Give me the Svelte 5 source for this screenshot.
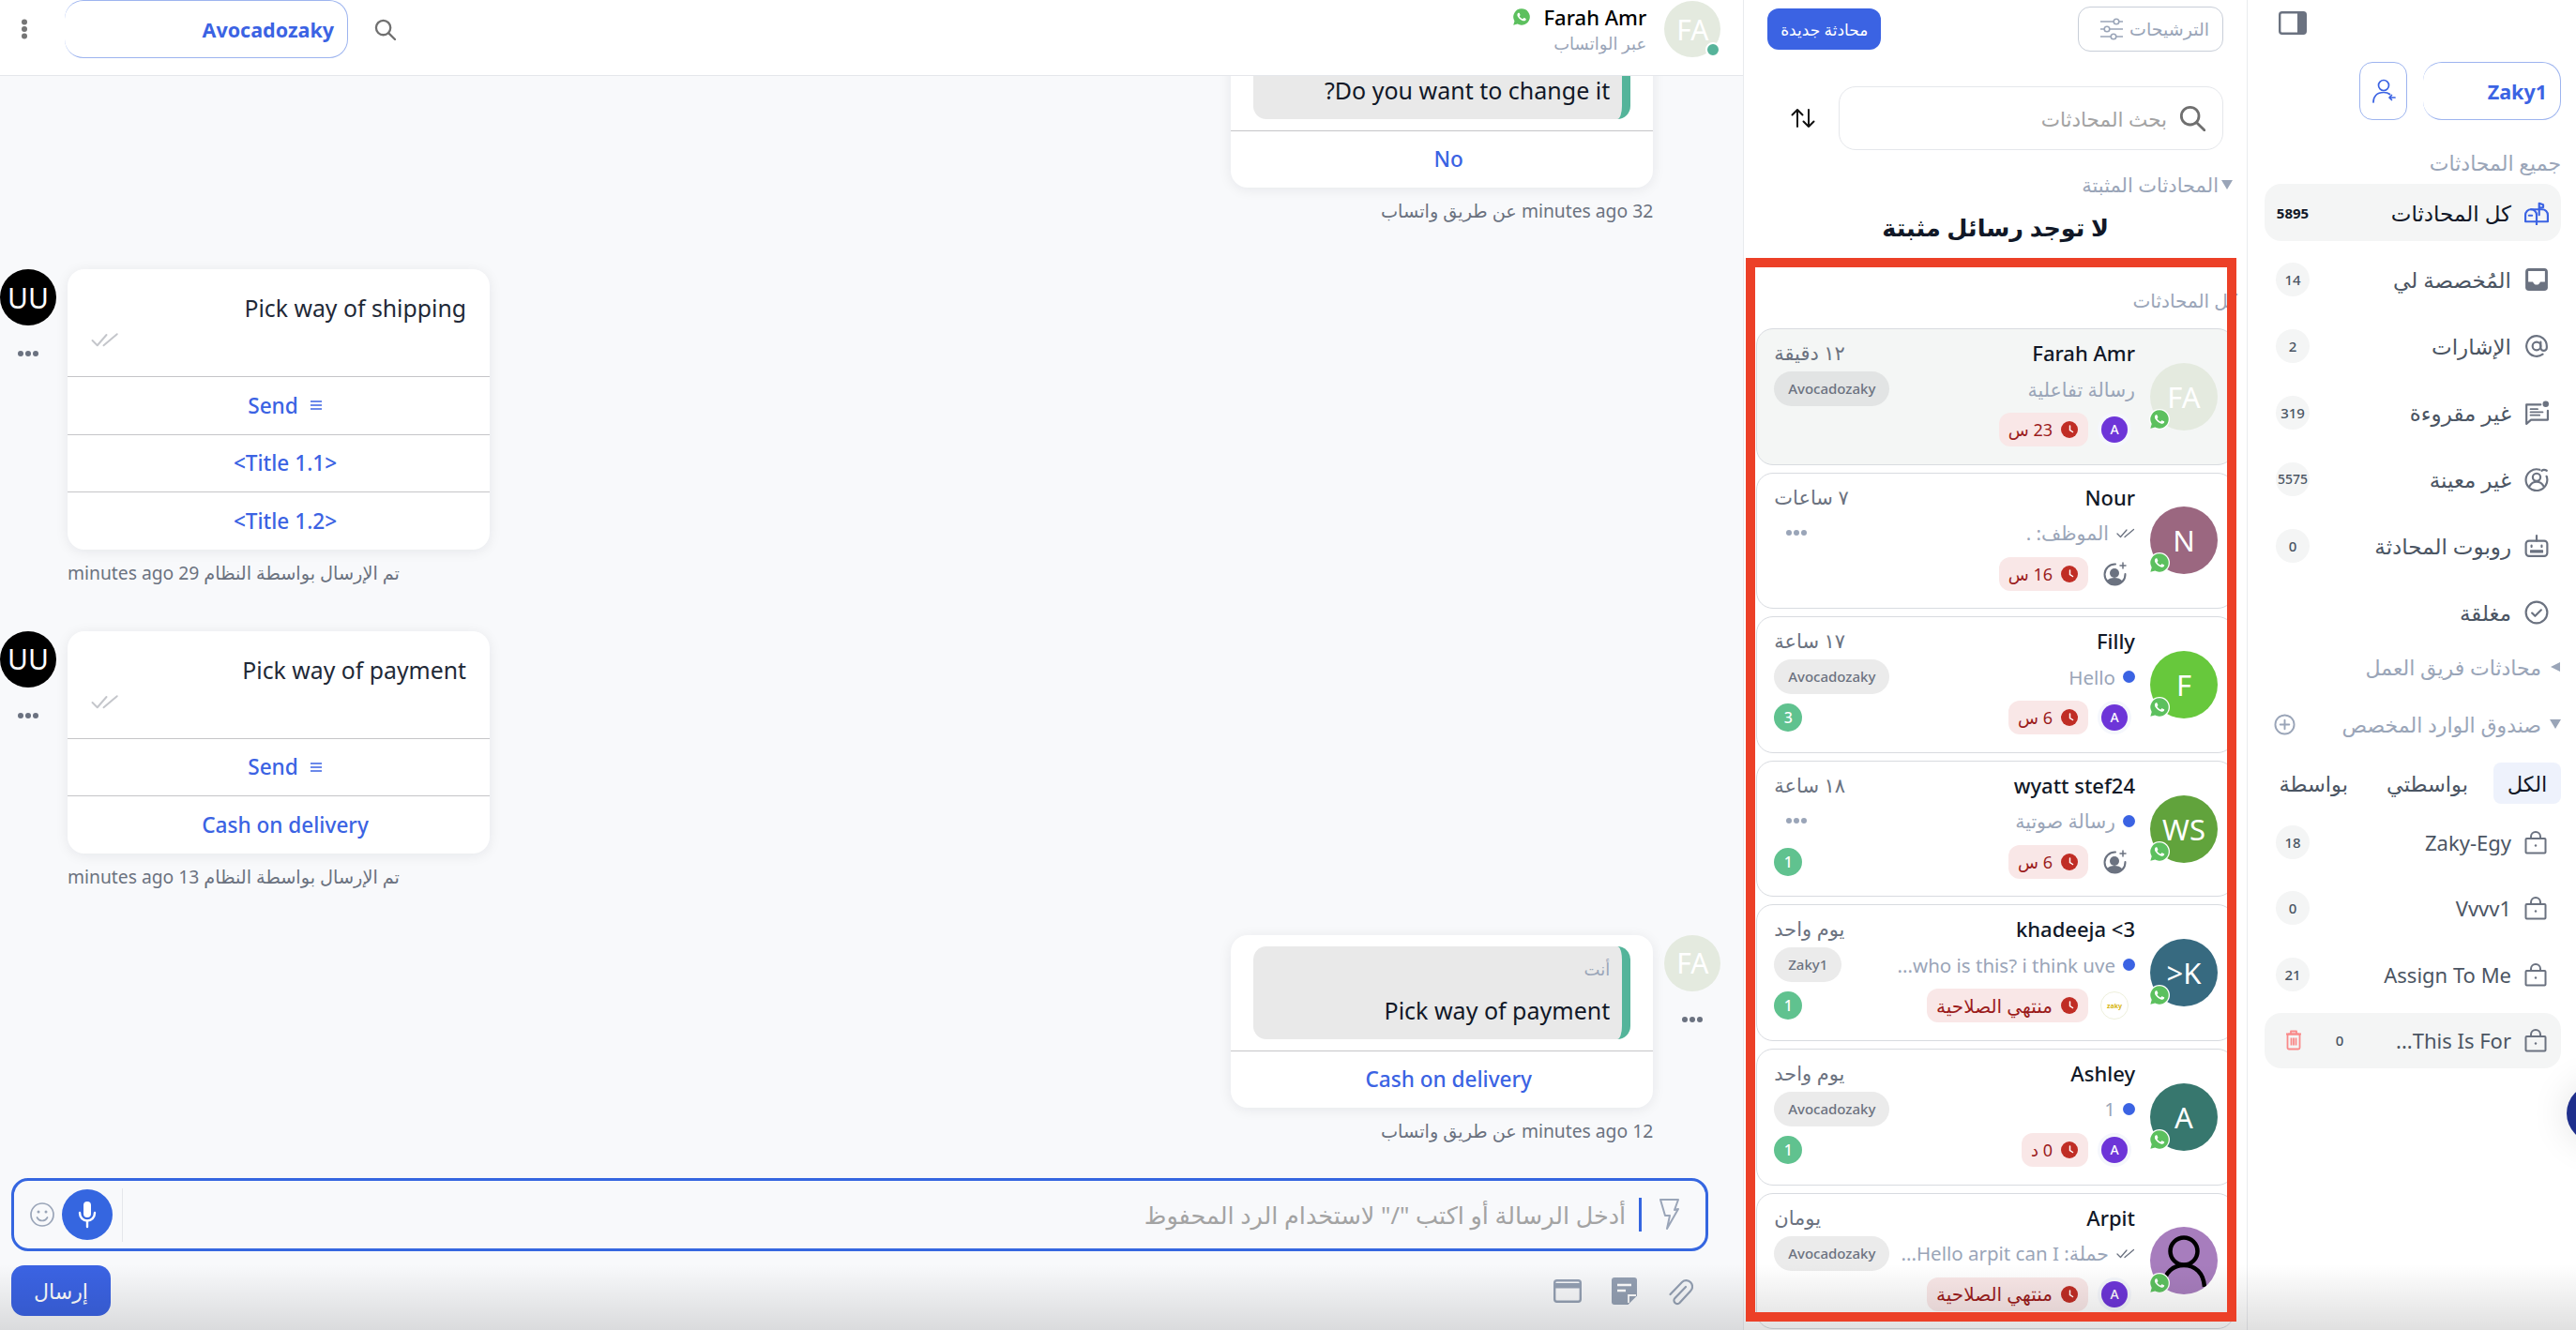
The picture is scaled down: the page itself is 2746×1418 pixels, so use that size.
<script lang="ts">
  const navItems = [
    { icon: 'mailbox', label: 'كل المحادثات', count: '5895', active: true },
    { icon: 'inbox', label: 'المُخصصة لي', count: '14' },
    { icon: 'at', label: 'الإشارات', count: '2' },
    { icon: 'unread', label: 'غير مقروءة', count: '319' },
    { icon: 'unseen', label: 'غير معينة', count: '5575' },
    { icon: 'bot', label: 'روبوت المحادثة', count: '0' },
    { icon: 'closed', label: 'مغلقة' }
  ];

  const customInboxes = [
    { label: 'Zaky-Egy', count: '18' },
    { label: 'Vvvv1', count: '0' },
    { label: 'Assign To Me', count: '21' },
    { label: 'This Is For...', count: '0', active: true }
  ];

  const expired = 'منتهي الصلاحية';

  const conversations = [
    { name: 'Farah Amr', initials: 'FA', color: '#e4eadf', time: '١٢ دقيقة', tag: 'Avocadozaky', preview: 'رسالة تفاعلية', sla: '23 س', owner: 'agent', active: true },
    { name: 'Nour', initials: 'N', color: '#9b6780', time: '٧ ساعات', preview: 'الموظف: .', mark: 'check', sla: '16 س', owner: 'none' },
    { name: 'Filly', initials: 'F', color: '#67c83c', time: '١٧ ساعة', tag: 'Avocadozaky', preview: 'Hello', mark: 'dot', sla: '6 س', owner: 'agent', count: 3 },
    { name: 'wyatt stef24', initials: 'WS', color: '#61a33c', time: '١٨ ساعة', preview: 'رسالة صوتية', mark: 'dot', sla: '6 س', owner: 'none', count: 1 },
    { name: '3> khadeeja', initials: 'K<', color: '#376a80', time: 'يوم واحد', tag: 'Zaky1', preview: 'who is this? i think uve...', mark: 'dot', sla: expired, owner: 'logo', count: 1 },
    { name: 'Ashley', initials: 'A', color: '#37776e', time: 'يوم واحد', tag: 'Avocadozaky', preview: '1', mark: 'dot', sla: '0 د', owner: 'agent', count: 1 },
    { name: 'Arpit', initials: '', color: '#a77dbd', time: 'يومان', tag: 'Avocadozaky', preview: 'حملة: Hello arpit can I...', mark: 'check', sla: expired, owner: 'agent' }
  ];
</script>

{#snippet whatsapp(size)}
  <svg width={size} height={size} viewBox="-1 -1 26 26">
    <circle cx="12" cy="12" r="13" fill="#fff" />
    <path fill="#5cc05e" d="M12 .6A11.4 11.4 0 0 0 2.2 17.8L.6 23.4l5.8-1.5A11.4 11.4 0 1 0 12 .6z" />
    <path fill="#fff" d="M17.5 14.4c-.3-.15-1.76-.87-2.03-.97-.27-.1-.47-.15-.67.15-.2.3-.77.97-.94 1.16-.17.2-.35.22-.64.08-.3-.15-1.26-.47-2.4-1.48-.88-.79-1.48-1.76-1.65-2.06-.17-.3-.02-.46.13-.6.13-.14.3-.35.45-.52.15-.18.2-.3.3-.5.1-.2.05-.37-.03-.52-.07-.15-.67-1.61-.91-2.2-.25-.6-.5-.5-.67-.52h-.57c-.2 0-.52.08-.8.38-.27.3-1.04 1.02-1.04 2.48s1.07 2.87 1.22 3.07c.15.2 2.1 3.2 5.08 4.5.71.3 1.26.48 1.7.62.71.23 1.36.2 1.87.12.57-.09 1.76-.72 2-1.42.25-.69.25-1.29.18-1.41-.08-.12-.28-.2-.57-.34z" />
  </svg>
{/snippet}

{#snippet searchIcon(size, color)}
  <svg width={size} height={size} viewBox="0 0 24 24" fill="none" stroke={color} stroke-width="2.4" stroke-linecap="round">
    <circle cx="10" cy="10" r="8" />
    <path d="M16 16l7 7" />
  </svg>
{/snippet}

{#snippet checks(width, color)}
  <svg {width} viewBox="0 0 20 11" fill="none" stroke={color} stroke-width="1.3" stroke-linecap="round" stroke-linejoin="round">
    <path d="M1 6l3.5 3.5L11 2" />
    <path d="M9 9.5L18.5 1.5" />
  </svg>
{/snippet}

{#snippet triangle(dir)}
  <svg class="tri" width="12" height="10" viewBox="0 0 12 10" fill="#9aa5b8">
    {#if dir === 'down'}
      <path d="M0 0h12L6 10z" />
    {:else}
      <path d="M11 0v10L1 5z" />
    {/if}
  </svg>
{/snippet}

{#snippet navIcon(name, color)}
  <svg width="26" height="26" viewBox="0 0 24 24" fill="none" stroke={color} stroke-width="2" stroke-linecap="round" stroke-linejoin="round">
    {#if name === 'mailbox'}
      <path d="M6.5 8.5h11a5.5 5.5 0 0 1 5.5 5.5v6.5H1V14a5.5 5.5 0 0 1 5.5-5.5z" />
      <path d="M6.5 8.5A5.5 5.5 0 0 1 12 14v6.5" />
      <path d="M14.5 14V2.5l4 1.5v2.5l-4 .5" />
      <path d="M4.5 14.5h3" />
      <path d="M12 20.5v3" />
    {:else if name === 'inbox'}
      <rect x="1" y="1" width="22" height="22" rx="3.5" fill={color} stroke="none" />
      <path fill="#fff" stroke="none" d="M3.8 3.8h16.4v10.4H15.6c-.5 1.7-1.9 2.9-3.6 2.9s-3.1-1.2-3.6-2.9H3.8z" />
    {:else if name === 'at'}
      <circle cx="12" cy="12" r="4" />
      <path d="M16 8v5.5a3 3 0 0 0 6 0V12a10 10 0 1 0-4 8" />
    {:else if name === 'unread'}
      <path d="M16 4H2v19l4.5-4H23v-9" />
      <path d="M6 8.5h7M6 11.5h12M6 14.5h9" stroke-width="1.6" />
      <circle cx="21" cy="3.5" r="3" fill={color} stroke="none" />
    {:else if name === 'unseen'}
      <path d="M15 2.6A10.5 10.5 0 1 0 21.8 9" />
      <circle cx="12" cy="10" r="3.8" />
      <path d="M5 19c1.5-3 4-4.5 7-4.5s5.5 1.5 7 4.5" />
      <path d="M17 3.5c1.5-1.2 3-1.2 5 0" />
    {:else if name === 'bot'}
      <rect x="1.5" y="7" width="21" height="15" rx="3" />
      <path d="M12 2.5V7" />
      <circle cx="12" cy="2" r="1" fill={color} stroke="none" />
      <path d="M7 11.5v1.5M17 11.5v1.5" />
      <path d="M6 16.5h12v2H6z" fill={color} stroke-width="1" />
    {:else if name === 'closed'}
      <circle cx="12" cy="12" r="10.5" />
      <path d="M7.5 12.5l3 3 6-6" />
    {/if}
  </svg>
{/snippet}

{#snippet lockedCase()}
  <svg width="24" height="26" viewBox="0 0 24 26" fill="none" stroke="#6b7280" stroke-width="2" stroke-linejoin="round">
    <rect x="1.5" y="9" width="21" height="15.5" rx="1" />
    <path d="M7 9V7a5 5 0 0 1 10 0v2" />
    <circle cx="12" cy="16.5" r="1.2" fill="#6b7280" stroke="none" />
  </svg>
{/snippet}

{#snippet clock()}
  <svg width="18" height="18" viewBox="0 0 18 18">
    <circle cx="9" cy="9" r="9" fill="#c02d25" />
    <path d="M9.5 5v4.500l3 2" fill="none" stroke="#fff" stroke-width="1.5" stroke-linecap="round" />
  </svg>
{/snippet}

{#snippet moreDots(color)}
  <svg width="24" height="8" viewBox="0 0 24 8" fill={color}>
    <circle cx="4" cy="4" r="3" />
    <circle cx="12" cy="4" r="3" />
    <circle cx="20" cy="4" r="3" />
  </svg>
{/snippet}

{#snippet hamburger()}
  <svg width="14" height="12" viewBox="0 0 14 12" fill="none" stroke="#3b63e3" stroke-width="1.7">
    <path d="M1 2h12M1 6h12M1 10h12" />
  </svg>
{/snippet}

<div class="app" dir="rtl">
  <aside class="sidebar">
    <div class="panel-toggle">
      <svg width="30" height="25" viewBox="0 0 30 25">
        <rect x="1.2" y="1.2" width="27.6" height="22.6" rx="2.5" fill="#fff" stroke="#6b7280" stroke-width="2.4" />
        <path d="M20 1.2h6.300a2.500 2.500 0 0 1 2.500 2.500v17.600a2.500 2.500 0 0 1-2.500 2.500H20z" fill="#6b7280" />
      </svg>
    </div>
    <div class="account-row">
      <div class="chip side-chip">Zaky1</div>
      <button type="button" class="switch-btn" aria-label="switch">
        <svg width="26" height="26" viewBox="0 0 26 26" fill="none" stroke="#3b63e3" stroke-width="1.7" stroke-linecap="round" stroke-linejoin="round">
          <circle cx="13" cy="7" r="5.5" />
          <path d="M2 25c0-6 3.500-10.500 11-10.500 3 0 5 .7 6.500 2" />
          <path d="M19 20h6M21.500 17.500L19 20l2.500 2.500" />
        </svg>
      </button>
    </div>
    <div class="section-label first">جميع المحادثات</div>
    <nav class="nav">
      {#each navItems as item}
        <div class="nav-row" class:active={item.active}>
          {@render navIcon(item.icon, item.active ? '#3b63e3' : '#6b7280')}
          <span class="nav-text">{item.label}</span>
          {#if item.count}
            <span class="badge" class:small={item.count.length > 3}>{item.count}</span>
          {/if}
        </div>
      {/each}
    </nav>
    <div class="section-label team">{@render triangle('left')}<span>محادثات فريق العمل</span></div>
    <div class="section-label custom">
      {@render triangle('down')}<span>صندوق الوارد المخصص</span>
      <svg class="add" width="23" height="23" viewBox="0 0 24 24" fill="none" stroke="#9aa5b8" stroke-width="2" stroke-linecap="round">
        <circle cx="12" cy="12" r="10.5" />
        <path d="M12 7v10M7 12h10" />
      </svg>
    </div>
    <div class="tabs">
      <span class="tab current">الكل</span>
      <span class="tab">بواسطتي</span>
      <span class="tab">بواسطة</span>
    </div>
    <div class="inboxes">
      {#each customInboxes as inbox}
        <div class="inbox-row" class:active={inbox.active}>
          {@render lockedCase()}
          <span class="nav-text">{inbox.label}</span>
          <span class="badge" class:ghost={inbox.active}>{inbox.count}</span>
          {#if inbox.active}
            <svg class="trash" width="18" height="22" viewBox="0 0 18 22" fill="none" stroke="#f98a8a" stroke-width="1.8" stroke-linejoin="round">
              <path d="M1 4.500h16M6 4.500V1.500h6v3" />
              <rect x="2.5" y="4.5" width="13" height="16" rx="1.5" />
              <path d="M6.500 8.500v8M9 8.500v8M11.500 8.500v8" />
            </svg>
          {/if}
        </div>
      {/each}
    </div>
  </aside>

  <section class="list">
    <div class="list-top">
      <button type="button" class="filter-btn">
        <span>الترشيحات</span>
        <svg width="26" height="24" viewBox="0 0 26 24" fill="none" stroke="#9aa5b8" stroke-width="1.6">
          <path d="M1 4h14M21 4h4M1 12h4M11 12h14M1 20h11M18 20h7" />
          <circle cx="18" cy="4" r="2.8" />
          <circle cx="8" cy="12" r="2.8" />
          <circle cx="15" cy="20" r="2.8" />
        </svg>
      </button>
      <button type="button" class="new-btn">محادثة جديدة</button>
    </div>
    <div class="search-row">
      <div class="search-box">
        {@render searchIcon(28, '#6f6f6f')}
        <span>بحث المحادثات</span>
      </div>
      <svg class="sort" width="26" height="22" viewBox="0 0 26 22" fill="none" stroke="#111" stroke-width="2" stroke-linecap="round" stroke-linejoin="round">
        <path d="M7 20V2M1.500 7.500L7 2l5.500 5.500" />
        <path d="M19 2v18M13.500 14.500L19 20l5.500-5.500" />
      </svg>
    </div>
    <div class="pinned-label">{@render triangle('down')}<span>المحادثات المثبتة</span></div>
    <div class="no-pinned">لا توجد رسائل مثبتة</div>
    <div class="all-label">كل المحادثات</div>
    <div class="cards">
      {#each conversations as c}
        <article class="card" class:active={c.active}>
          <div class="avatar" style="background:{c.color}">
            {#if c.initials}
              {c.initials}
            {:else}
              <svg width="72" height="72" viewBox="0 0 72 72" fill="none" stroke="#000" stroke-width="4.5">
                <circle cx="36" cy="26" r="14.5" />
                <path d="M15 60c1-11 9-19 21-19s21 8 22 23" />
              </svg>
            {/if}
            <span class="avatar-wa">{@render whatsapp(22)}</span>
          </div>
          <div class="card-main">
            <div class="line one">
              <span class="name">{c.name}</span>
              <span class="time">{c.time}</span>
            </div>
            <div class="line two">
              <span class="preview">
                {#if c.mark === 'dot'}
                  <i class="blue-dot"></i>
                {:else if c.mark === 'check'}
                  {@render checks(20, '#6b7280')}
                {/if}
                <span class="preview-text">{c.preview}</span>
              </span>
              {#if c.tag}
                <span class="tag">{c.tag}</span>
              {:else}
                <span class="more">{@render moreDots('#9aa5b8')}</span>
              {/if}
            </div>
            <div class="line three">
              <div class="owner">
                {#if c.owner === 'agent'}
                  <span class="agent">A</span>
                {:else if c.owner === 'logo'}
                  <span class="logo">zaky</span>
                {:else}
                  <svg width="28" height="28" viewBox="0 0 28 28" fill="none">
                    <path d="M15 3.500a11 11 0 1 0 10.500 10.500" stroke="#6b7280" stroke-width="2" stroke-linecap="round" />
                    <circle cx="14" cy="13" r="5" fill="#6b7280" />
                    <path d="M5.500 21.500c2-2.500 5-3.500 8.500-3.500s6.500 1 8.500 3.500c-2 2.800-5 4.500-8.500 4.500s-6.500-1.700-8.500-4.500z" fill="#6b7280" />
                    <path d="M23 2v6M20 5h6" stroke="#6b7280" stroke-width="1.5" stroke-linecap="round" />
                  </svg>
                {/if}
              </div>
              <span class="sla" class:long={c.sla === expired}>{@render clock()}<span>{c.sla}</span></span>
              {#if c.count}
                <span class="count">{c.count}</span>
              {/if}
            </div>
          </div>
        </article>
      {/each}
    </div>
  </section>

  <main class="chat">
    <header class="chat-head">
      <div class="head-avatar">FA<i class="online"></i></div>
      <div class="head-info">
        <div class="head-name"><span>Farah Amr</span>{@render whatsapp(20)}</div>
        <div class="head-via">عبر الواتساب</div>
      </div>
      <div class="head-tools">
        {@render searchIcon(23, '#707070')}
        <div class="chip head-chip">Avocadozaky</div>
        <svg width="8" height="22" viewBox="0 0 8 22" fill="#757575">
          <circle cx="4" cy="3.5" r="3" />
          <circle cx="4" cy="11" r="3" />
          <circle cx="4" cy="18.5" r="3" />
        </svg>
      </div>
    </header>

    <div class="messages">
      <div class="msg out">
        <div class="msg-row">
          <div class="side"></div>
          <div class="bubble">
            <div class="bubble-quoted">
              <div class="quote cut">
                <div class="quote-text">Do you want to change it?</div>
              </div>
            </div>
            <div class="reply">No</div>
          </div>
        </div>
        <div class="meta">32 minutes ago عن طريق واتساب</div>
      </div>

      <div class="msg in">
        <div class="msg-row">
          <div class="side">
            <div class="msg-avatar uu">UU</div>
            <span class="side-more">{@render moreDots('#6b7280')}</span>
          </div>
          <div class="bubble">
            <div class="bubble-body">
              <div class="body-text">Pick way of shipping</div>
              {@render checks(30, '#c4c6cb')}
            </div>
            <div class="reply">
              {@render hamburger()}
              <span>Send</span>
            </div>
            <div class="reply">{'<Title 1.1>'}</div>
            <div class="reply">{'<Title 1.2>'}</div>
          </div>
        </div>
        <div class="meta">تم الإرسال بواسطة النظام 29 minutes ago</div>
      </div>

      <div class="msg in">
        <div class="msg-row">
          <div class="side">
            <div class="msg-avatar uu">UU</div>
            <span class="side-more">{@render moreDots('#6b7280')}</span>
          </div>
          <div class="bubble">
            <div class="bubble-body">
              <div class="body-text">Pick way of payment</div>
              {@render checks(30, '#c4c6cb')}
            </div>
            <div class="reply">
              {@render hamburger()}
              <span>Send</span>
            </div>
            <div class="reply">Cash on delivery</div>
          </div>
        </div>
        <div class="meta">تم الإرسال بواسطة النظام 13 minutes ago</div>
      </div>

      <div class="msg out">
        <div class="msg-row">
          <div class="side">
            <div class="msg-avatar fa">FA</div>
            <span class="side-more">{@render moreDots('#6b7280')}</span>
          </div>
          <div class="bubble">
            <div class="bubble-quoted">
              <div class="quote">
                <div class="quote-who">أنت</div>
                <div class="quote-text">Pick way of payment</div>
              </div>
            </div>
            <div class="reply">Cash on delivery</div>
          </div>
        </div>
        <div class="meta">12 minutes ago عن طريق واتساب</div>
      </div>
    </div>

    <div class="composer">
      <div class="input-box">
        <svg width="21" height="35" viewBox="0 0 21 35" fill="none" stroke="#9aa5b8" stroke-width="2" stroke-linejoin="round">
          <path d="M1 1h19l-4 11 4-1-12 21 3-14H6L1 1z" />
        </svg>
        <i class="caret"></i>
        <span class="placeholder">أدخل الرسالة أو اكتب "/" لاستخدام الرد المحفوظ</span>
        <i class="input-sep"></i>
        <button type="button" class="mic" aria-label="mic">
          <svg width="20" height="30" viewBox="0 0 20 30" fill="none" stroke="#fff" stroke-width="2.4" stroke-linecap="round">
            <rect x="6" y="1" width="8" height="17" rx="4" fill="#fff" stroke="none" />
            <path d="M2 13c0 5 3.500 8.500 8 8.500s8-3.500 8-8.500" />
            <path d="M10 22v6" />
          </svg>
        </button>
        <svg class="emoji" width="26" height="26" viewBox="0 0 26 26" fill="none" stroke="#9aa5b8" stroke-width="1.7" stroke-linecap="round">
          <circle cx="13" cy="13" r="12" />
          <circle cx="9" cy="10" r="1.5" fill="#9aa5b8" stroke="none" />
          <circle cx="17" cy="10" r="1.5" fill="#9aa5b8" stroke="none" />
          <path d="M7.500 16c1.300 2.500 3.300 3.500 5.500 3.500s4.200-1 5.500-3.500" />
        </svg>
      </div>
      <div class="composer-foot">
        <div class="tools">
          <svg width="28" height="31" viewBox="0 0 28 31" fill="none" stroke="#94a0b3" stroke-width="2.2" stroke-linecap="round">
            <path d="M20 11L8.500 23a3.500 3.500 0 0 0 5 5L25 15.500a6.500 6.500 0 0 0-9-9.500L3.500 19" />
          </svg>
          <svg width="27" height="29" viewBox="0 0 27 29">
            <path d="M3 0h21a3 3 0 0 1 3 3v16.500L17.500 29H3a3 3 0 0 1-3-3V3a3 3 0 0 1 3-3z" fill="#94a0b3" />
            <path d="M6 8h15M6 14h9" stroke="#fff" stroke-width="2.4" />
            <path d="M18 27v-8h8" fill="none" stroke="#fff" stroke-width="1.8" />
          </svg>
          <svg width="30" height="25" viewBox="0 0 30 25">
            <rect x="1.2" y="1.2" width="27.6" height="22.6" rx="2.5" fill="none" stroke="#94a0b3" stroke-width="2.4" />
            <rect x="1" y="4" width="28" height="5.5" fill="#94a0b3" />
          </svg>
        </div>
        <button type="button" class="send">إرسال</button>
      </div>
    </div>
  </main>

  <div class="shade"></div>
  <div class="red-frame"></div>
  <div class="fab"></div>
</div>

<style>
  :global(body) {
    margin: 0;
    background: #fff;
  }

  button {
    font-family: inherit;
    cursor: pointer;
  }

  .app {
    position: relative;
    display: flex;
    height: 1418px;
    overflow: hidden;
    font-family: 'Noto Sans', 'DejaVu Sans', sans-serif;
    color: #111827;
    background: #fff;
  }

  /* sidebar */
  .sidebar {
    flex: 0 0 351px;
    box-sizing: border-box;
    padding: 12px 16px 0 18px;
    border-left: 1px solid #e9ebee;
  }

  .panel-toggle {
    display: flex;
    justify-content: flex-end;
    height: 25px;
    padding-left: 15px;
  }

  .account-row {
    display: flex;
    gap: 17px;
    margin-top: 29px;
  }

  .chip {
    box-sizing: border-box;
    height: 62px;
    display: flex;
    align-items: center;
    padding-right: 14px;
    border: 1px solid #9db4ef;
    border-left: none;
    border-radius: 20px;
    color: #3b63e3;
    font-size: 21.5px;
    font-weight: 700;
    background: #fff;
  }

  .side-chip {
    width: 147px;
  }

  .switch-btn {
    width: 51px;
    height: 62px;
    padding: 0;
    border: 1px solid #9db4ef;
    border-radius: 14px;
    background: #fff;
    display: flex;
    align-items: center;
    justify-content: center;
  }

  .section-label {
    display: flex;
    align-items: center;
    gap: 9px;
    height: 30px;
    color: #9aa5b8;
    font-size: 22px;
  }

  .section-label.first {
    margin-top: 30px;
  }

  .section-label.team {
    margin-top: 13px;
  }

  .section-label.custom {
    margin-top: 31px;
  }

  .add {
    margin-right: auto;
    margin-left: 10px;
  }

  .nav {
    display: flex;
    flex-direction: column;
    gap: 10px;
    margin-top: 8px;
  }

  .nav-row,
  .inbox-row {
    display: flex;
    align-items: center;
    gap: 14px;
    height: 61px;
    padding: 0 13px 0 12px;
    border-radius: 18px;
    font-size: 23px;
    color: #4b5563;
  }

  .nav-row.active {
    background: #f4f5f5;
    color: #111827;
  }

  .nav-row.active .badge {
    background: transparent;
    color: #111827;
    font-weight: 700;
    font-size: 15px;
  }

  .nav-text {
    white-space: nowrap;
  }

  .badge {
    margin-right: auto;
    min-width: 36px;
    height: 36px;
    border-radius: 50%;
    display: flex;
    align-items: center;
    justify-content: center;
    background: #f4f5f5;
    font-size: 15px;
    font-weight: 500;
    color: #4b5563;
  }

  .badge.small {
    font-size: 14px;
  }

  .badge.ghost {
    background: #f4f5f5;
  }

  .tabs {
    display: flex;
    gap: 13px;
    margin-top: 26px;
  }

  .tab {
    height: 44px;
    padding: 0 14px;
    display: flex;
    align-items: center;
    border-radius: 8px;
    font-size: 22.5px;
    color: #4b5563;
  }

  .tab.current {
    min-width: 44px;
    justify-content: center;
    background: #eef2fc;
    color: #111827;
  }

  .inboxes {
    display: flex;
    flex-direction: column;
    gap: 11.5px;
    margin-top: 11px;
  }

  .inbox-row {
    height: 59px;
    padding-right: 15px;
    font-size: 22px;
  }

  .inbox-row.active {
    background: #f4f5f5;
  }

  .trash {
    margin-left: 10px;
    margin-right: 8px;
  }

  /* conversation list */
  .list {
    flex: 0 0 524px;
    box-sizing: border-box;
    border-left: 1px solid #e9ebee;
    background: #fff;
  }

  .list-top {
    display: flex;
    justify-content: space-between;
    align-items: center;
    height: 48px;
    margin-top: 7px;
    padding: 0 25px;
  }

  .filter-btn {
    box-sizing: border-box;
    width: 155px;
    height: 48px;
    display: flex;
    align-items: center;
    gap: 6px;
    padding: 0 14px;
    border: 1px solid #c8ced8;
    border-radius: 13px;
    background: #fff;
    color: #9aa5b8;
    font-size: 19px;
  }

  .new-btn {
    width: 121px;
    height: 44px;
    padding: 0;
    border: none;
    border-radius: 12px;
    background: #3b63e3;
    color: #fff;
    font-size: 17px;
    font-weight: 500;
  }

  .search-row {
    display: flex;
    align-items: center;
    margin-top: 37px;
    padding-right: 25px;
  }

  .search-box {
    box-sizing: border-box;
    width: 410px;
    height: 68px;
    display: flex;
    align-items: center;
    gap: 13px;
    padding: 0 18px;
    border: 1px solid #e5e7eb;
    border-radius: 18px;
    color: #a3a3a3;
    font-size: 21.5px;
  }

  .sort {
    margin-right: 25px;
  }

  .pinned-label {
    display: flex;
    align-items: center;
    gap: 3px;
    height: 30px;
    margin-top: 22px;
    padding-right: 15px;
    color: #9aa5b8;
    font-size: 21px;
    font-weight: 500;
  }

  .no-pinned {
    margin-top: 12px;
    height: 36px;
    line-height: 36px;
    text-align: center;
    font-size: 25.5px;
    font-weight: 700;
  }

  .all-label {
    height: 30px;
    line-height: 30px;
    margin-top: 46px;
    padding-right: 10px;
    color: #9aa5b8;
    font-size: 20px;
    font-weight: 500;
  }

  .cards {
    display: flex;
    flex-direction: column;
    gap: 8px;
    margin: 14px 13px 0;
  }

  .card {
    box-sizing: border-box;
    flex: 0 0 145.6px;
    display: flex;
    align-items: center;
    gap: 16px;
    padding: 0 17px 0 18px;
    border: 1px solid #d8dbe0;
    border-radius: 18px;
  }

  .card.active {
    background: #f4f6f5;
  }

  .avatar {
    position: relative;
    flex: 0 0 72px;
    height: 72px;
    border-radius: 50%;
    display: flex;
    align-items: center;
    justify-content: center;
    color: #fff;
    font-size: 31px;
  }

  .avatar svg {
    border-radius: 50%;
  }

  .avatar-wa {
    position: absolute;
    left: -1px;
    top: 49px;
    line-height: 0;
  }

  .avatar-wa :global(svg) {
    border-radius: 0;
  }

  .card-main {
    flex: 1;
    min-width: 0;
    align-self: flex-start;
    padding-top: 7px;
  }

  .line {
    display: flex;
    align-items: center;
    justify-content: space-between;
  }

  .line.one {
    height: 36px;
  }

  .line.two {
    height: 37px;
    margin-top: 2px;
    gap: 12px;
  }

  .line.three {
    height: 36px;
    margin-top: 7px;
    justify-content: flex-start;
  }

  .name {
    font-size: 22px;
    font-weight: 500;
    color: #111827;
    white-space: nowrap;
  }

  .time {
    font-size: 21px;
    color: #6b7280;
    white-space: nowrap;
  }

  .preview {
    display: flex;
    align-items: center;
    gap: 8px;
    min-width: 0;
    color: #9aa5b8;
    font-size: 20.5px;
  }

  .preview-text {
    white-space: nowrap;
    overflow: hidden;
  }

  .blue-dot {
    flex: 0 0 13px;
    height: 13px;
    border-radius: 50%;
    background: #3b63e3;
  }

  .tag {
    flex-shrink: 0;
    height: 37px;
    line-height: 36px;
    padding: 0 15px;
    border-radius: 19px;
    background: #ebebeb;
    color: #6b7280;
    font-size: 15px;
    font-weight: 500;
  }

  .card.active .tag {
    background: #e2e4e4;
  }

  .more {
    margin-left: 12px;
    line-height: 0;
  }

  .owner {
    flex: 0 0 28px;
    height: 28px;
    margin-right: 8px;
    line-height: 0;
  }

  .agent {
    display: flex;
    align-items: center;
    justify-content: center;
    width: 28px;
    height: 28px;
    border-radius: 50%;
    background: #6d35d8;
    box-shadow: 0 0 0 4px #f5f7fc;
    color: #fff;
    font-size: 14px;
    font-weight: 500;
    line-height: 1;
  }

  .logo {
    display: flex;
    align-items: center;
    justify-content: center;
    box-sizing: border-box;
    width: 30px;
    height: 30px;
    margin: -1px;
    border: 1px solid #eef0dc;
    border-radius: 50%;
    color: #d6b50f;
    font-size: 7px;
    font-weight: 700;
    line-height: 1;
  }

  .sla {
    display: flex;
    align-items: center;
    gap: 9px;
    height: 36px;
    margin-right: 14px;
    padding: 0 11px 0 10px;
    border-radius: 12px;
    background: #f9e7e7;
    color: #9b1c1c;
    font-size: 18px;
    white-space: nowrap;
  }

  .sla.long {
    font-size: 20px;
  }

  .count {
    margin-right: auto;
    width: 30px;
    height: 30px;
    border-radius: 50%;
    display: flex;
    align-items: center;
    justify-content: center;
    background: #60c28f;
    color: #fff;
    font-size: 16px;
    font-weight: 500;
  }

  /* chat */
  .chat {
    flex: 1;
    min-width: 0;
    display: flex;
    flex-direction: column;
    background: #f8f9fb;
  }

  .chat-head {
    box-sizing: border-box;
    height: 81px;
    flex-shrink: 0;
    display: flex;
    gap: 19px;
    padding: 1px 24px 0 22px;
    background: #fff;
    border-bottom: 1px solid #e5e7eb;
    position: relative;
    z-index: 1;
  }

  .head-avatar {
    position: relative;
    width: 60px;
    height: 60px;
    border-radius: 50%;
    background: #e4eadf;
    color: #fff;
    font-size: 30px;
    display: flex;
    align-items: center;
    justify-content: center;
  }

  .online {
    position: absolute;
    left: 44px;
    top: 44px;
    width: 12px;
    height: 12px;
    border: 2px solid #fff;
    border-radius: 50%;
    background: #56b39a;
  }

  .head-info {
    flex: 1;
    padding-top: 2px;
  }

  .head-name {
    display: flex;
    align-items: center;
    gap: 14px;
    height: 30px;
    color: #000;
    font-size: 22px;
    font-weight: 500;
  }

  .head-via {
    height: 26px;
    line-height: 26px;
    color: #9aa5b8;
    font-size: 18px;
  }

  .head-tools {
    display: flex;
    align-items: center;
    gap: 28px;
    height: 62px;
    margin-top: -1px;
  }

  .head-chip {
    width: 302px;
    margin-left: 11px;
  }

  .messages {
    flex: 1;
    min-height: 0;
    overflow: hidden;
    display: flex;
    flex-direction: column;
    justify-content: flex-end;
    align-items: flex-start;
    gap: 50px;
    padding-bottom: 38px;
  }

  .msg {
    flex-shrink: 0;
    width: 522px;
  }

  .msg.out {
    margin-right: 24px;
  }

  .msg.in {
    align-self: flex-end;
  }

  .msg-row {
    display: flex;
    gap: 12px;
  }

  .msg.in .msg-row {
    flex-direction: row-reverse;
  }

  .side {
    flex: 0 0 60px;
    display: flex;
    flex-direction: column;
    align-items: center;
  }

  .msg-avatar {
    width: 60px;
    height: 60px;
    border-radius: 50%;
    color: #fff;
    font-size: 30px;
    display: flex;
    align-items: center;
    justify-content: center;
  }

  .msg-avatar.fa {
    background: #e4eadf;
  }

  .msg-avatar.uu {
    background: #000;
  }

  .side-more {
    margin-top: 26px;
    line-height: 0;
  }

  .bubble {
    width: 450px;
    background: #fff;
    border-radius: 18px;
    box-shadow: 0 2px 14px rgba(17, 24, 39, 0.08);
  }

  .bubble-quoted {
    padding: 12px 24px;
  }

  .quote {
    box-sizing: border-box;
    height: 99px;
    padding: 11px 13px 0;
    background: #e9e9e9;
    border-right: 9px solid #54b49a;
    border-radius: 14px;
  }

  .quote.cut {
    padding-top: 54px;
  }

  .quote-who {
    height: 26px;
    line-height: 26px;
    color: #9aa5b8;
    font-size: 18px;
  }

  .quote-text {
    height: 28px;
    line-height: 28px;
    font-size: 25px;
    color: #111827;
  }

  .quote-who + .quote-text {
    margin-top: 17px;
  }

  .bubble-body {
    box-sizing: border-box;
    height: 114px;
    padding: 27px 25px 0;
    display: flex;
    flex-direction: column;
    align-items: flex-start;
  }

  .bubble-body :global(svg) {
    align-self: flex-end;
    margin-top: 12px;
  }

  .body-text {
    height: 28px;
    line-height: 28px;
    font-size: 24.8px;
    color: #1f2937;
  }

  .reply {
    box-sizing: border-box;
    height: 61.5px;
    display: flex;
    align-items: center;
    justify-content: center;
    gap: 12px;
    padding-left: 14px;
    border-top: 1px solid #c5c5c8;
    color: #3b63e3;
    font-size: 22.6px;
    font-weight: 500;
  }

  .meta {
    height: 25px;
    line-height: 25px;
    margin-top: 12px;
    padding-right: 72px;
    color: #6b7280;
    font-size: 19.3px;
  }

  .msg.in .meta {
    padding-right: 0;
    padding-left: 72px;
    text-align: left;
  }

  .composer {
    flex-shrink: 0;
    padding: 0 37px 15px 12px;
  }

  .input-box {
    box-sizing: border-box;
    height: 78px;
    display: flex;
    align-items: center;
    padding: 0 28px 0 17px;
    border: 3px solid #3566e0;
    border-radius: 18px;
  }

  .caret {
    width: 3px;
    height: 36px;
    margin: 0 19px 0 14px;
    background: #3566e0;
  }

  .placeholder {
    color: #a3a3a3;
    font-size: 25.5px;
    white-space: nowrap;
  }

  .input-sep {
    width: 1px;
    height: 57px;
    margin-right: auto;
    margin-left: 10px;
    background: #e5e7eb;
  }

  .mic {
    width: 54px;
    height: 54px;
    padding: 0;
    border: none;
    border-radius: 50%;
    background: #3566e0;
    display: flex;
    align-items: center;
    justify-content: center;
  }

  .emoji {
    margin-right: 8px;
  }

  .composer-foot {
    display: flex;
    align-items: center;
    justify-content: space-between;
    margin-top: 15px;
  }

  .tools {
    display: flex;
    align-items: center;
    gap: 32px;
    padding-right: 16px;
  }

  .send {
    width: 106px;
    height: 54px;
    padding: 0;
    border: none;
    border-radius: 14px;
    background: #3b63e3;
    color: #fff;
    font-size: 22px;
  }

  /* things lying over the page */
  .shade {
    position: absolute;
    left: 0;
    right: 0;
    bottom: 0;
    height: 70px;
    background: linear-gradient(to bottom, rgba(0, 0, 0, 0), rgba(0, 0, 0, 0.12));
    pointer-events: none;
  }

  .red-frame {
    position: absolute;
    left: 1861px;
    top: 275px;
    width: 523px;
    height: 1134px;
    box-sizing: border-box;
    border: 10px solid #ec4027;
    pointer-events: none;
  }

  .fab {
    position: absolute;
    left: 2736px;
    top: 1156px;
    width: 62px;
    height: 62px;
    border-radius: 50%;
    background: #1f2f8c;
    box-shadow: 0 0 40px rgba(0, 0, 0, 0.12);
  }
</style>
